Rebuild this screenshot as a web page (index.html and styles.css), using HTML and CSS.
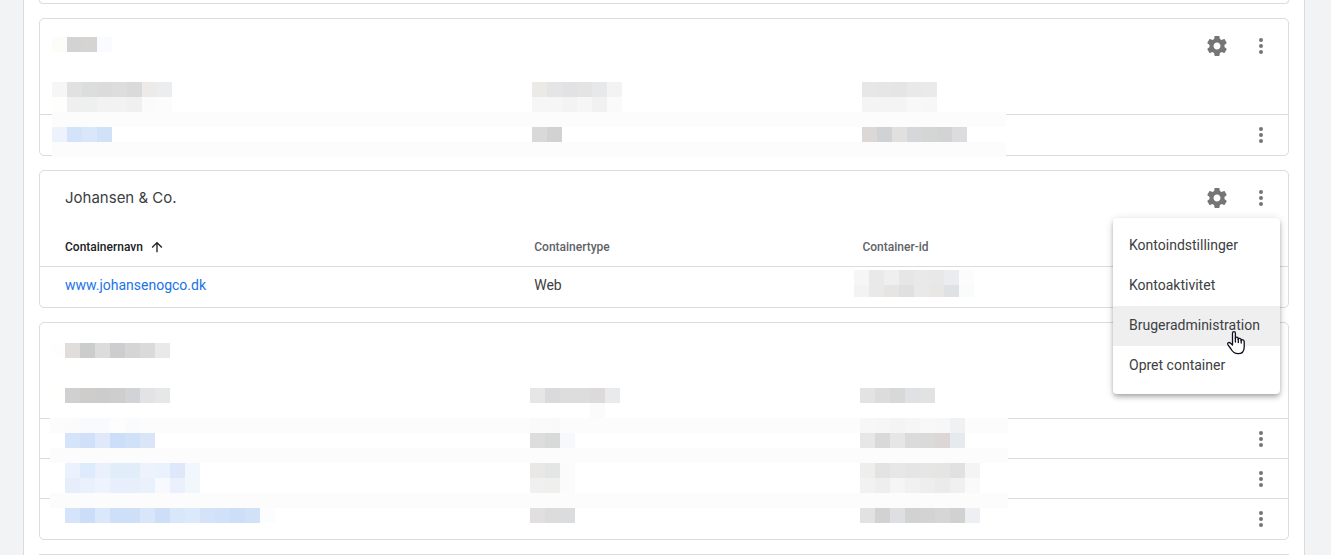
FILE: index.html
```html
<!DOCTYPE html>
<html lang="da">
<head>
<meta charset="utf-8">
<title>Konti</title>
<link rel="stylesheet" href="styles.css">
</head>
<body>
<svg class="sprite" aria-hidden="true">
  <symbol id="gear" viewBox="0 0 24 24"><path d="M19.43 12.98c.04-.32.07-.64.07-.98s-.03-.66-.07-.98l2.11-1.65c.19-.15.24-.42.12-.64l-2-3.46c-.12-.22-.39-.3-.61-.22l-2.49 1c-.52-.4-1.08-.73-1.69-.98l-.38-2.65C14.46 2.18 14.25 2 14 2h-4c-.25 0-.46.18-.49.42l-.38 2.65c-.61.25-1.17.59-1.69.98l-2.49-1c-.23-.09-.49 0-.61.22l-2 3.46c-.13.22-.07.49.12.64l2.11 1.65c-.04.32-.07.65-.07.98s.03.66.07.98l-2.11 1.65c-.19.15-.24.42-.12.64l2 3.46c.12.22.39.3.61.22l2.49-1c.52.4 1.08.73 1.69.98l.38 2.65c.03.24.24.42.49.42h4c.25 0 .46-.18.49-.42l.38-2.65c.61-.25 1.17-.59 1.69-.98l2.49 1c.23.09.49 0 .61-.22l2-3.46c.12-.22.07-.49-.12-.64l-2.11-1.65zM12 15.5c-1.93 0-3.5-1.57-3.5-3.5s1.57-3.5 3.5-3.5 3.5 1.57 3.5 3.5-1.57 3.5-3.5 3.5z"/></symbol>
  <symbol id="more" viewBox="0 0 24 24"><circle cx="12" cy="6" r="2"/><circle cx="12" cy="12" r="2"/><circle cx="12" cy="18" r="2"/></symbol>
  <symbol id="up" viewBox="0 0 24 24"><path d="M4 12l1.41 1.41L11 7.83V20h2V7.83l5.58 5.59L20 12l-8-8-8 8z"/></symbol>
</svg>
<main class="panel">
  <section class="card card-start"></section>

  <section class="card">
    <header class="card-head">
      <h2 class="card-title"></h2>
      <button class="icon-button" aria-label="Kontoindstillinger"><svg class="icon"><use href="#gear"/></svg></button>
      <button class="icon-button" aria-label="Flere handlinger"><svg class="icon"><use href="#more"/></svg></button>
    </header>
    <table class="containers">
      <thead><tr><th class="col-name"></th><th class="col-type"></th><th class="col-id"></th><th class="col-menu"></th></tr></thead>
      <tbody>
        <tr><td></td><td></td><td></td><td class="actions"><button class="icon-button" aria-label="Flere handlinger"><svg class="icon"><use href="#more"/></svg></button></td></tr>
      </tbody>
    </table>
    <svg class="mask" data-mask="first" aria-hidden="true"></svg>
  </section>

  <section class="card">
    <header class="card-head">
      <h2 class="card-title">Johansen &amp; Co.</h2>
      <button class="icon-button" aria-label="Kontoindstillinger"><svg class="icon"><use href="#gear"/></svg></button>
      <button class="icon-button" aria-label="Flere handlinger" aria-expanded="true"><svg class="icon"><use href="#more"/></svg></button>
    </header>
    <table class="containers">
      <thead><tr><th class="col-name sorted" aria-sort="ascending"><span class="sort">Containernavn<svg class="sort-icon"><use href="#up"/></svg></span></th><th class="col-type">Containertype</th><th class="col-id">Container-id</th><th class="col-menu"></th></tr></thead>
      <tbody>
        <tr><td><a class="link" href="#">www.johansenogco.dk</a></td><td>Web</td><td></td><td></td></tr>
      </tbody>
    </table>
    <svg class="mask" data-mask="second" aria-hidden="true"></svg>
    <div class="menu" role="menu">
      <button class="menu-item" role="menuitem">Kontoindstillinger</button>
      <button class="menu-item" role="menuitem">Kontoaktivitet</button>
      <button class="menu-item active" role="menuitem">Brugeradministration</button>
      <button class="menu-item" role="menuitem">Opret container</button>
      <svg class="cursor" viewBox="0 0 20 25" aria-hidden="true"><path d="M6.5 15V3.2C6.5 1 9.4 1 9.4 3.2V8.6C9.4 6.7 12.2 6.7 12.2 8.8V9.4C12.5 7.8 15.1 8 15.1 9.9V10.6C15.5 9.2 18.2 9.5 18.2 11.5V17C18.2 21.4 16 23.7 12 23.7C8.2 23.7 6.6 22 5 19L2 14.9C.9 13 2.8 11.8 4.3 13.1Z"/><path d="M9.4 8V12M12.3 9V12.5M15.2 10.5V13"/></svg>
    </div>
  </section>

  <section class="card">
    <header class="card-head">
      <h2 class="card-title"></h2>
    </header>
    <table class="containers">
      <thead><tr><th class="col-name"></th><th class="col-type"></th><th class="col-id"></th><th class="col-menu"></th></tr></thead>
      <tbody>
        <tr><td></td><td></td><td></td><td class="actions"><button class="icon-button" aria-label="Flere handlinger"><svg class="icon"><use href="#more"/></svg></button></td></tr>
        <tr><td></td><td></td><td></td><td class="actions"><button class="icon-button" aria-label="Flere handlinger"><svg class="icon"><use href="#more"/></svg></button></td></tr>
        <tr><td></td><td></td><td></td><td class="actions"><button class="icon-button" aria-label="Flere handlinger"><svg class="icon"><use href="#more"/></svg></button></td></tr>
      </tbody>
    </table>
    <svg class="mask" data-mask="third" aria-hidden="true"></svg>
  </section>

  <section class="card card-end"></section>
</main>
<script src="script.js"></script>
</body>
</html>
```
FILE: styles.css
```css
* { box-sizing: border-box; }

body {
  margin: 0;
  background: #f1f3f4;
  color: #3c4043;
  font: 14px/20px Roboto, sans-serif;
}

button { border: 0; padding: 0; background: none; font: inherit; color: inherit; cursor: pointer; }

.sprite { position: absolute; width: 0; height: 0; }

.panel {
  display: flex;
  flex-direction: column;
  gap: 14px;
  min-height: 100vh;
  margin: 0 26px 0 23px;
  padding: 0 15px;
  background: #fff;
  border: solid #dadce0;
  border-width: 0 1px;
}

.card {
  position: relative;
  flex: none;
  background: #fff;
  border: 1px solid #dadce0;
  border-radius: 5px;
}

.card-start { height: 4px; border-top: 0; border-radius: 0 0 5px 5px; }
.card-end { flex: 1; border-bottom: 0; border-radius: 5px 5px 0 0; }

.card-head {
  display: flex;
  align-items: center;
  gap: 20px;
  height: 56px;
  padding: 0 15px 2px 25px;
}

.card-title {
  flex: 1;
  margin: 0;
  padding-bottom: 1px;
  font: 400 15px/24px Inter, sans-serif;
}

.icon-button { display: block; width: 24px; height: 24px; }
.icon { display: block; width: 24px; height: 24px; fill: #757575; }

.containers { width: 100%; table-layout: fixed; border-collapse: separate; border-spacing: 0; }
.containers th, .containers td { height: 40px; padding: 0 0 0 25px; text-align: left; border-bottom: 1px solid #dadce0; }
.containers th { font-size: 12px; line-height: 16px; font-weight: 500; color: #5f6368; }
.containers td { padding-bottom: 4px; }
.containers tr:last-child td { border-bottom: 0; }
.containers .sorted { color: #202124; }
.containers thead th { border-bottom: 1px solid #dadce0; }
.containers .actions { padding: 0; }
.actions .icon-button { margin: 0 15px 0 auto; }

.col-name { width: 37.6%; }
.col-type { width: 26.3%; }
.col-menu { width: 56px; }

.sort { display: flex; align-items: center; gap: 6px; }
.sort-icon { width: 16px; height: 16px; fill: currentColor; }
.link { color: #1a73e8; text-decoration: none; }

.mask { position: absolute; left: 0; top: 0; width: 1px; height: 1px; overflow: visible; pointer-events: none; shape-rendering: crispEdges; }

.menu {
  position: absolute;
  z-index: 2;
  top: 47px;
  right: 8px;
  min-width: 167px;
  padding: 8px 0;
  background: #fff;
  border-radius: 4px;
  box-shadow: 0 2px 4px -1px rgba(0,0,0,.2), 0 4px 5px 0 rgba(0,0,0,.14), 0 1px 10px 0 rgba(0,0,0,.12);
}

.menu-item { display: block; width: 100%; height: 40px; padding: 0 16px 2px; text-align: left; }
.menu-item.active { background: #efefef; }

.cursor { position: absolute; right: 34px; top: 112px; width: 20px; height: 25px; fill: #fff; stroke: #101020; stroke-width: 1.3; stroke-linejoin: round; stroke-linecap: round; }
```
FILE: script.js
```js
// Mosaic strips that hide account data: [x, y, colours], one 15px tile per colour.
const TILE = 15;
const masks = {
  first: {
    bands: [[12, 93, 954, 15], [12, 123, 954, 15]],
    strips: [
      [12, 18, 'fcfcf9 d3d3d3 d6d4d2 f9fbfe'],
      [12, 63, 'f6f6f6 e1e1e1 dbdedd dbdbdb dddddd dadada edebe9 ecedef'],
      [12, 78, 'fefefc efefef eef0ef f2f2f2 f2f2f2 f0f0f0 fbfbfb fcfcfc'],
      [492, 63, 'ebeae7 e5e5e5 e2e2e5 e4e4e4 e6e8ea f3f3f3'],
      [492, 78, 'f6f6f6 f6f6f6 f3f3f3 f6f6f6 f1f1f1 fafafa'],
      [822, 63, 'e7e7e7 e6e6e6 e5e5e5 e9e9e9 eaeaea'],
      [822, 78, 'f4f4f4 f4f4f4 f4f4f4 f8f8f8 f7f7f7'],
      [12, 108, 'edf2fc d3e4fa dae7fb d1e1f8'],
      [492, 108, 'd9d9d9 d2d2d2'],
      [822, 108, 'dcd8d7 d1d2d3 e1e0de d4d8db d4d5d5 d3d3d3 dcdcdf']
    ]
  },
  second: {
    bands: [],
    strips: [
      [814, 99, 'f6f6f6 e9e9e9 efefef e6e6e6 e9e9e9 e8e8e8 ebecee fcfcfc'],
      [814, 114, 'f4f3f1 e9e9ea e7e5e3 dfe0e2 e9e9ea e8e7e5 e0e1e4 fafcfc', 12]
    ]
  },
  third: {
    bands: [[10, 95, 958, 15], [10, 125, 958, 15], [10, 170, 958, 15]],
    strips: [
      [10, 20, 'fefefe e1dddc cbcccc dcdcdc cdcdcf d5d5d5 dadada e8e9ea'],
      [10, 65, 'fffffe d0d0d0 cfcdcb cccccc cecece d2d3d6 e3e3e5 e5e8e7'],
      [490, 65, 'e6e6e6 dadadc dddddd dddddd dcdada e9eaec'],
      [820, 65, 'e3e3e3 dcdcdc d8d8d8 e0e1e4 e2e2e2'],
      [550, 80, 'fbfbfb'],
      [25, 95, 'fbfbfb f8fafe f8fafe fdfdfd fafbfd'],
      [490, 95, 'fafafa f9f9f9'],
      [820, 95, 'f7f7f7 f6f6f6 f4f4f4 f6f6f6 f8f8f8 f7f7f7 eff1f3'],
      [25, 110, 'd6e4fb d0e0f9 e0e9f9 ccdef8 d1e1f8 dae6f8'],
      [490, 110, 'dddddd d8dad9 f6f9fc'],
      [820, 110, 'e7e7e7 d9d9d9 e6e6e6 dbdbdb dadada dcd7d6 e5eaee'],
      [25, 140, 'eaf3fd deebfc eaf1fc e2edfa e2edfa edf2fd eaf2fd dfe8fa f2f7fe'],
      [490, 140, 'e9e8e7 e3e6e4 fbfbfb'],
      [820, 140, 'eeeeec e3e3e3 e7e7e7 e5e5e5 e6e6e6 e5e5e3 e1e1e1 f4f4f4'],
      [25, 155, 'e6eefc e9f1fc eef3fe e7effc e7effc e9f1fd f7f9fe ebf1fc f2f7fc'],
      [490, 155, 'f0f0f0 efefed fbfbfb'],
      [820, 155, 'f2f2f2 eeeeee f5f5f5 f1f1f1 eeeeee ebebeb f0f0f0 fafafa'],
      [25, 185, 'd6e4fb cbddf8 dbe7fa cddff9 cedff8 d9e6f9 ccdef8 d9e7fb dce9fb d4e3fa d1e1f9 cddef8 d0e1f8 fbfdfe'],
      [490, 185, 'e1dfdf dcdcdc dadcde'],
      [820, 185, 'e2e2e2 d2d2d2 dddfe2 d2d2d2 d3d3d3 d6d6d6 d1d1d1 edeff2']
    ]
  }
};

function addRect(svg, x, y, width, height, fill) {
  const rect = document.createElementNS('http://www.w3.org/2000/svg', 'rect');
  Object.entries({ x, y, width, height, fill }).forEach(([k, v]) => rect.setAttribute(k, v));
  svg.appendChild(rect);
}

document.querySelectorAll('[data-mask]').forEach((svg) => {
  const { bands, strips } = masks[svg.dataset.mask];
  bands.forEach((b) => addRect(svg, ...b, '#fcfcfc'));
  strips.forEach(([x, y, colours, height = TILE]) => {
    colours.split(' ').forEach((c, i) => addRect(svg, x + i * TILE, y, TILE, height, '#' + c));
  });
});
```
